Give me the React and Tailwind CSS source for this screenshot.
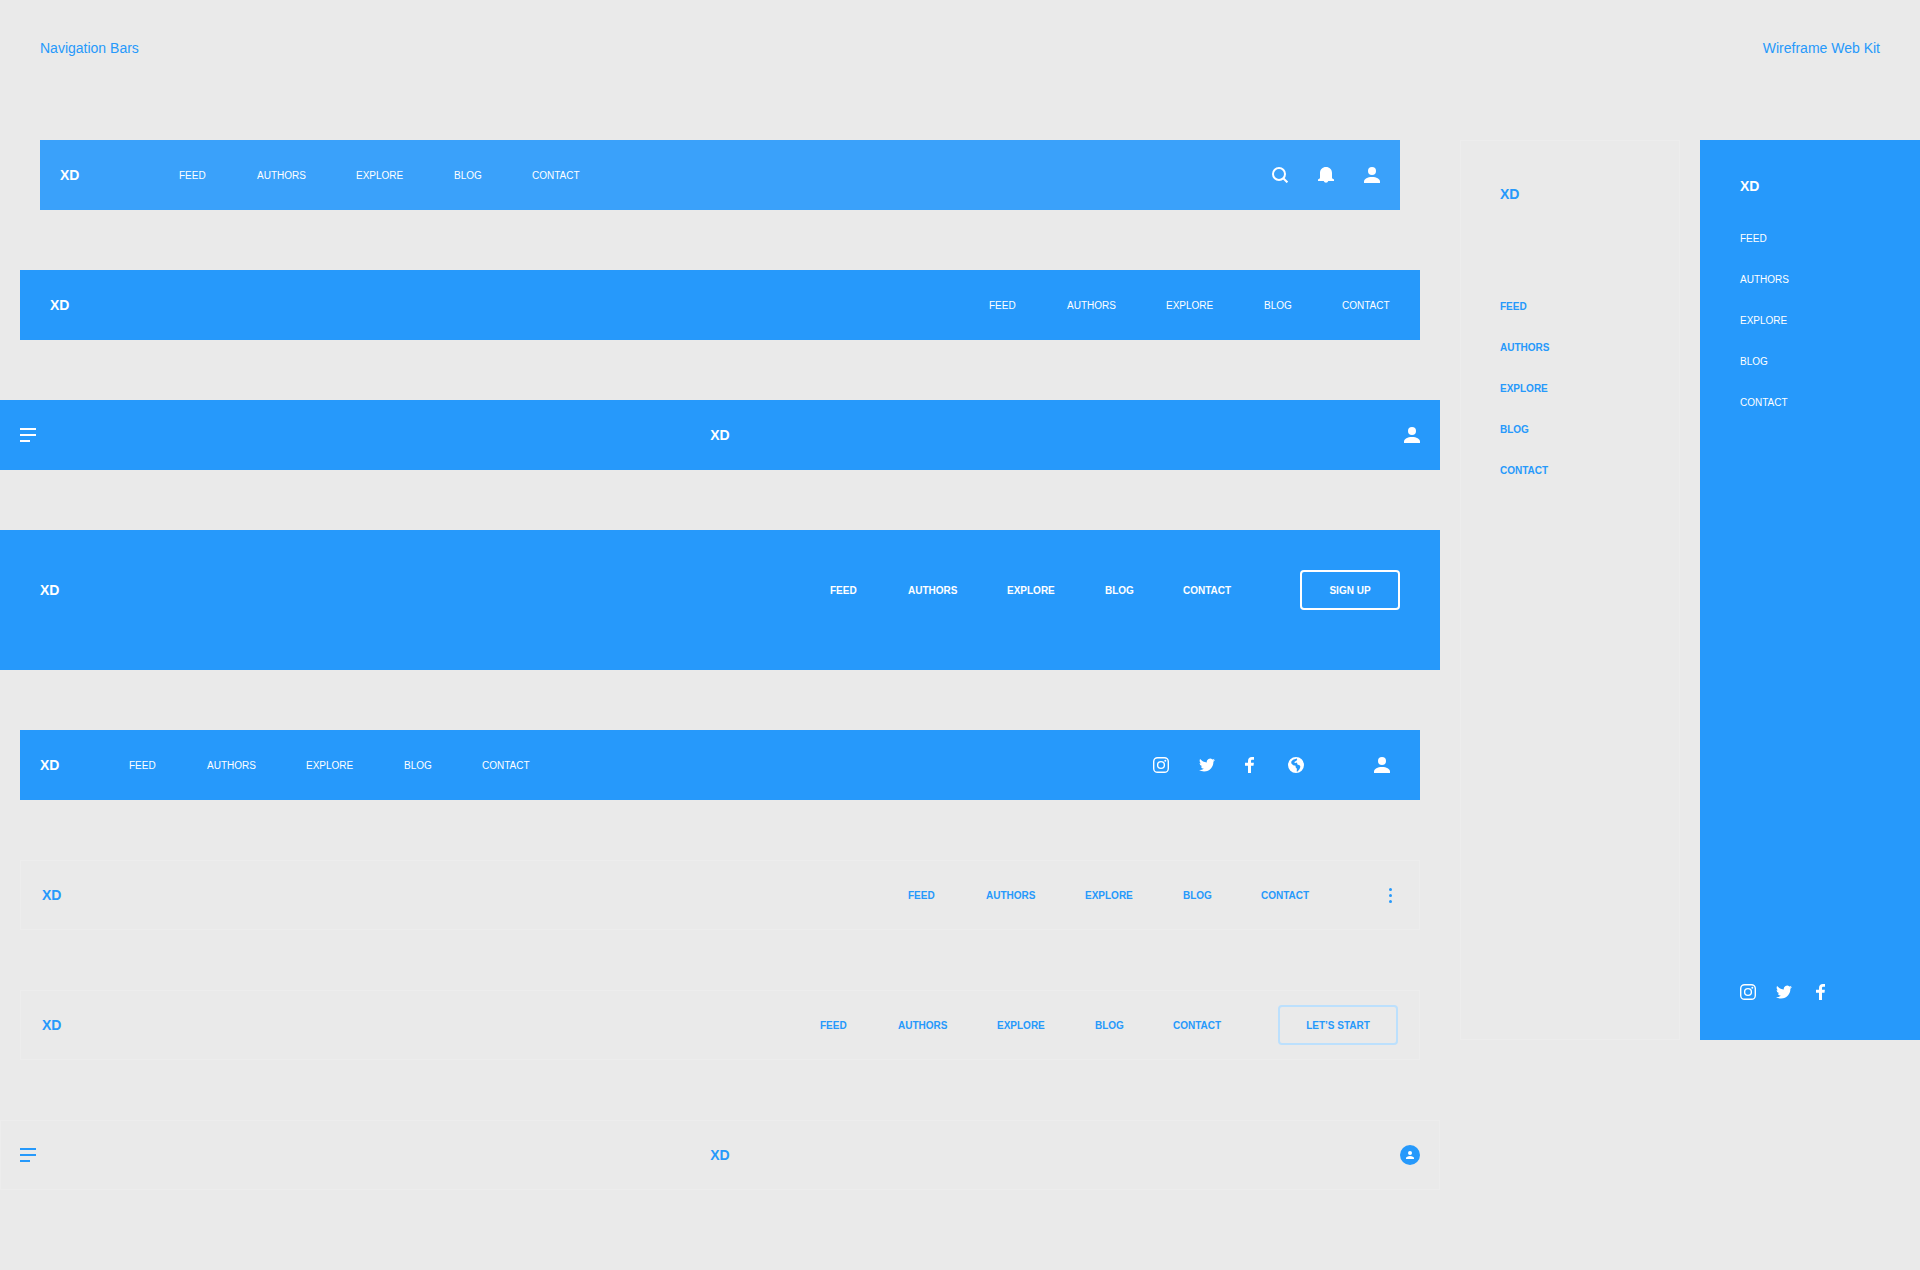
import React from "react";

const LINKS = ["FEED", "AUTHORS", "EXPLORE", "BLOG", "CONTACT"];

function PersonIcon({ className = "h-4 w-4" }) {
  return (
    <svg viewBox="0 0 16 16" className={className} fill="currentColor" aria-hidden="true">
      <circle cx="8" cy="4" r="4" />
      <path d="M8 10c-4.400 0-8 2-8 4.500V16h16v-1.500C16 12 12.400 10 8 10z" />
    </svg>
  );
}

function SearchIcon() {
  return (
    <svg viewBox="0 0 16 16" className="h-4 w-4" fill="none" stroke="currentColor" strokeWidth="2" aria-hidden="true">
      <circle cx="7" cy="7" r="6" />
      <path d="M11.300 11.300 15.400 15.400" />
    </svg>
  );
}

function BellIcon() {
  return (
    <svg viewBox="0 0 16 16" className="h-4 w-4" fill="currentColor" aria-hidden="true">
      <path d="M8 0C4.500 0 2 2.500 2 6v4.500c0 1-1 1.500-2 2V14h5.700a2.400 2.400 0 0 0 4.600 0H16v-1.500c-1-.5-2-1-2-2V6c0-3.500-2.500-6-6-6z" />
    </svg>
  );
}

function MenuIcon() {
  return (
    <svg viewBox="0 0 16 16" className="h-4 w-4" fill="currentColor" aria-hidden="true">
      <path d="M0 1h16v2H0zM0 7h16v2H0zM0 13h10v2H0z" />
    </svg>
  );
}

function InstagramIcon() {
  return (
    <svg viewBox="0 0 16 16" className="h-4 w-4" fill="none" stroke="currentColor" strokeWidth="1.400" aria-hidden="true">
      <rect x="0.7" y="0.7" width="14.600" height="14.600" rx="3.900" />
      <circle cx="8" cy="8" r="3.400" />
      <circle cx="12.300" cy="3.700" r="1" fill="currentColor" stroke="none" />
    </svg>
  );
}

function TwitterIcon() {
  return (
    <svg viewBox="0 0 24 24" className="h-4 w-4" fill="currentColor" aria-hidden="true">
      <path d="M23.950 4.570a10 10 0 0 1-2.820.770 4.960 4.960 0 0 0 2.160-2.720c-.95.560-2 .960-3.130 1.190a4.920 4.920 0 0 0-8.380 4.480C7.690 8.100 4.070 6.130 1.640 3.160a4.820 4.820 0 0 0-.67 2.480c0 1.710.87 3.210 2.190 4.100a4.900 4.900 0 0 1-2.230-.620v.060a4.920 4.920 0 0 0 3.950 4.830 5 5 0 0 1-2.210.080 4.940 4.940 0 0 0 4.600 3.420A9.870 9.870 0 0 1 0 19.540a13.990 13.990 0 0 0 7.550 2.210c9.050 0 14-7.500 14-13.990 0-.21 0-.42-.02-.63a9.940 9.940 0 0 0 2.420-2.560z" />
    </svg>
  );
}

function FacebookIcon() {
  return (
    <svg viewBox="0 0 13 16" className="h-4 w-[13px]" fill="currentColor" aria-hidden="true">
      <path d="M3 16V8.700H0V5.800H3V4c0-2.600 1.500-4 3.800-4 1 0 1.900.1 2.200.1v2.600H7.400C6.200 2.700 6 3.300 6 4.100v1.700h2.900l-.4 2.900H6V16z" />
    </svg>
  );
}

function GlobeIcon() {
  return (
    <svg viewBox="0 0 16 16" className="h-4 w-4" fill="currentColor" aria-hidden="true">
      <path
        fillRule="evenodd"
        d="M8 0a8 8 0 1 0 0 16A8 8 0 0 0 8 0zM8.800 1.400 9.200 2.600 8.200 3.900 6.900 4.400 6.200 5.600 7.600 6 9 5.500 9.400 7.400 11.600 8.200 12.400 9.800 11.600 12 9.600 14.400 8.700 14.400 8.900 11.800 7.600 10.200 7.600 8.800 5.200 8.200 3.400 6.600 3.200 4.800 5 2.700z"
      />
    </svg>
  );
}

function DotsIcon() {
  return (
    <svg viewBox="0 0 3 15" className="h-[15px] w-[3px]" fill="currentColor" aria-hidden="true">
      <circle cx="1.500" cy="1.500" r="1.500" />
      <circle cx="1.500" cy="7.500" r="1.500" />
      <circle cx="1.500" cy="13.500" r="1.500" />
    </svg>
  );
}

function Logo() {
  return (
    <a href="#home" className="text-sm leading-5 font-bold">
      XD
    </a>
  );
}

function IconButton({ label, className = "", children }) {
  return (
    <button type="button" aria-label={label} className={`block shrink-0 ${className}`}>
      {children}
    </button>
  );
}

function NavLinks({ bold }) {
  return (
    <ul
      className={`grid grid-cols-[78px_99px_98px_78px_48px] text-[10px] leading-[15px] whitespace-nowrap ${bold ? "font-bold" : ""}`}
    >
      {LINKS.map((link) => (
        <li key={link}>
          <a href={`#${link.toLowerCase()}`} className="block">{link}</a>
        </li>
      ))}
    </ul>
  );
}

function SideLinks({ bold }) {
  return (
    <ul className={`flex flex-col gap-[26px] text-[10px] leading-[15px] ${bold ? "font-bold" : ""}`}>
      {LINKS.map((link) => (
        <li key={link}>
          <a href={`#${link.toLowerCase()}`} className="block">{link}</a>
        </li>
      ))}
    </ul>
  );
}

const SOLID = "bg-[#2699fb] text-white";
const OUTLINE = "border border-[#ededed] text-[#2699fb]";

export default function App() {
  return (
    <div className="min-h-screen bg-[#eaeaea] font-['Liberation_Sans',Arial,sans-serif]">
      <header className="flex justify-between px-10 pt-[38px] pb-[82px] text-sm leading-5 text-[#2699fb]">
        <h1>Navigation Bars</h1>
        <p>Wireframe Web Kit</p>
      </header>

      <main className="flex gap-5">
        <div className="flex min-w-0 flex-1 flex-col gap-[60px]">
          <nav className="mx-10 flex h-[70px] items-center bg-[#3aa1fa] px-5 text-white">
            <div className="w-[119px]">
              <Logo />
            </div>
            <NavLinks />
            <div className="ml-auto flex gap-[30px]">
              <IconButton label="Search"><SearchIcon /></IconButton>
              <IconButton label="Notifications"><BellIcon /></IconButton>
              <IconButton label="Account"><PersonIcon /></IconButton>
            </div>
          </nav>

          <nav className={`mx-5 flex h-[70px] items-center justify-between px-[30px] ${SOLID}`}>
            <Logo />
            <NavLinks />
          </nav>

          <nav className={`grid h-[70px] grid-cols-3 items-center px-5 ${SOLID}`}>
            <IconButton label="Menu"><MenuIcon /></IconButton>
            <div className="text-center"><Logo /></div>
            <div className="flex justify-end">
              <IconButton label="Account"><PersonIcon /></IconButton>
            </div>
          </nav>

          <nav className={`flex items-center px-10 pt-10 pb-[60px] ${SOLID}`}>
            <Logo />
            <div className="ml-auto flex items-center gap-[69px]">
              <NavLinks bold />
              <button type="button" className="h-10 w-[100px] rounded border-2 border-white text-[10px] font-bold">
                SIGN UP
              </button>
            </div>
          </nav>

          <nav className={`mx-5 flex h-[70px] items-center pr-[30px] pl-5 ${SOLID}`}>
            <div className="w-[89px]">
              <Logo />
            </div>
            <NavLinks />
            <div className="ml-auto flex gap-[70px]">
              <div className="flex gap-[30px]">
                <IconButton label="Instagram"><InstagramIcon /></IconButton>
                <IconButton label="Twitter"><TwitterIcon /></IconButton>
                <IconButton label="Facebook"><FacebookIcon /></IconButton>
                <IconButton label="Language"><GlobeIcon /></IconButton>
              </div>
              <IconButton label="Account"><PersonIcon /></IconButton>
            </div>
          </nav>

          <nav className={`mx-5 flex h-[70px] items-center pr-[27px] pl-[21px] ${OUTLINE}`}>
            <Logo />
            <div className="ml-auto flex items-center gap-20">
              <NavLinks bold />
              <IconButton label="More"><DotsIcon /></IconButton>
            </div>
          </nav>

          <nav className={`mx-5 flex h-[70px] items-center px-[21px] ${OUTLINE}`}>
            <Logo />
            <div className="ml-auto flex items-center gap-[57px]">
              <NavLinks bold />
              <button type="button" className="h-10 w-[120px] rounded border-2 border-[#bce0fd] text-[10px] font-bold">
                LET’S START
              </button>
            </div>
          </nav>

          <nav className={`grid h-[70px] grid-cols-3 items-center px-[19px] ${OUTLINE}`}>
            <IconButton label="Menu"><MenuIcon /></IconButton>
            <div className="text-center"><Logo /></div>
            <div className="flex justify-end">
              <button
                type="button"
                aria-label="Account"
                className="flex h-5 w-5 items-center justify-center rounded-full bg-[#2699fb] text-white"
              >
                <PersonIcon className="h-2 w-2" />
              </button>
            </div>
          </nav>
        </div>

        <nav className={`h-[900px] w-[220px] shrink-0 px-[39px] pt-[41px] ${OUTLINE}`}>
          <div className="pb-[93px]"><Logo /></div>
          <SideLinks bold />
        </nav>

        <nav className={`flex h-[900px] w-[220px] shrink-0 flex-col px-10 pt-[34px] pb-10 ${SOLID}`}>
          <div className="pb-[33px]"><Logo /></div>
          <SideLinks />
          <div className="mt-auto flex gap-5">
            <IconButton label="Instagram"><InstagramIcon /></IconButton>
            <IconButton label="Twitter"><TwitterIcon /></IconButton>
            <IconButton label="Facebook" className="pl-1"><FacebookIcon /></IconButton>
          </div>
        </nav>
      </main>
    </div>
  );
}
